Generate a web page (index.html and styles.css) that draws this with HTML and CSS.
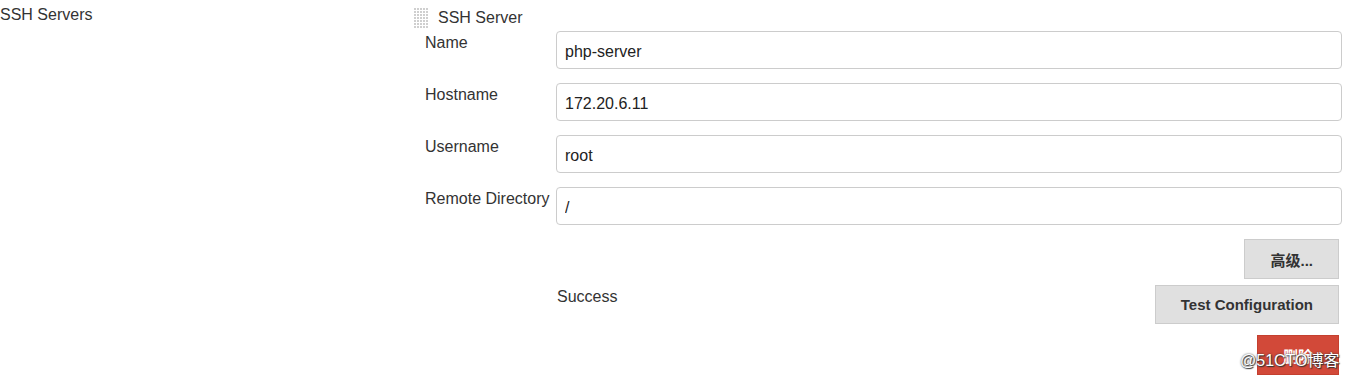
FILE: index.html
```html
<!DOCTYPE html>
<html lang="zh">
    <head>
        <meta charset="utf-8">
        <link rel="stylesheet" href="styles.css">
    </head>
    <body>
        <div class="page">
            <div class="section-title">SSH Servers</div>
            <div class="repeated">
                <div class="chunk-header">
                    <span class="handle"></span>
                    SSH Server
                </div>
                <div class="form">
                    <label class="label">Name</label>
                    <input class="field" type="text" value="php-server">
                    <label class="label">Hostname</label>
                    <input class="field" type="text" value="172.20.6.11">
                    <label class="label">Username</label>
                    <input class="field" type="text" value="root">
                    <label class="label">Remote Directory</label>
                    <input class="field" type="text" value="/">
                </div>
                <div class="actions">
                    <div class="action-row">
                        <button class="btn">高级...</button>
                    </div>
                    <div class="action-row test-row">
                        <span class="status">Success</span>
                        <button class="btn">Test Configuration</button>
                    </div>
                    <div class="action-row delete-row">
                        <button class="btn btn-danger">删除</button>
                    </div>
                </div>
            </div>
        </div>
        <div class="watermark">@51CTO博客</div>
    </body>
</html>
```

FILE: styles.css
```css
* {
    box-sizing: border-box;
}

html, body {
    margin: 0;
    height: 379px;
    overflow: hidden;
    background-color: #ffffff;
}

body {
    font-family: "Liberation Sans", Arial, "Noto Sans CJK SC", sans-serif;
    font-size: 16px;
    line-height: 20px;
    color: #333333;
}

.page {
    display: flex;
}

.section-title {
    width: 412px;
    padding-top: 5px;
}

.repeated {
    flex: 1;
    margin-right: 5px;
}

.chunk-header {
    display: flex;
    align-items: center;
    height: 31px;
    padding-top: 4px;
}

.handle {
    width: 14px;
    height: 20px;
    margin-left: 2px;
    margin-right: 10px;
    background-color: #cfcfcf;
    background-image:
        linear-gradient(to right, transparent 2px, #ffffff 2px),
        linear-gradient(to bottom, transparent 2px, #ffffff 2px);
    background-size: 3px 3px;
}

.form {
    display: grid;
    grid-template-columns: 131px 1fr;
    row-gap: 14px;
    padding-left: 13px;
}

.label {
    padding-top: 2px;
}

.field {
    height: 38px;
    padding: 3px 8px 0;
    border: 1px solid #cccccc;
    border-radius: 4px;
    font-family: inherit;
    font-size: 16px;
    color: #222222;
    background-color: #ffffff;
}

.actions {
    margin-top: 14px;
    padding-left: 144px;
    padding-right: 3px;
}

.action-row {
    display: flex;
    justify-content: flex-end;
    align-items: flex-start;
}

.test-row {
    justify-content: space-between;
    margin-top: 6px;
    padding-left: 1px;
}

.status {
    padding-top: 2px;
}

.delete-row {
    margin-top: 11px;
}

.btn {
    height: 40px;
    padding: 0 25px;
    border: 1px solid #cccccc;
    background-color: #e0e0e0;
    color: #333333;
    font-family: inherit;
    font-size: 15px;
    font-weight: bold;
}

.test-row .btn {
    height: 39px;
}

.btn-danger {
    background-color: #d24939;
    border-color: #c4402f;
    color: #ffffff;
}

.watermark {
    position: absolute;
    left: 1240px;
    top: 351px;
    font-size: 16px;
    color: #ffffff;
    text-shadow: 0 0 2px #333333, 1px 1px 1px #333333;
}
```
